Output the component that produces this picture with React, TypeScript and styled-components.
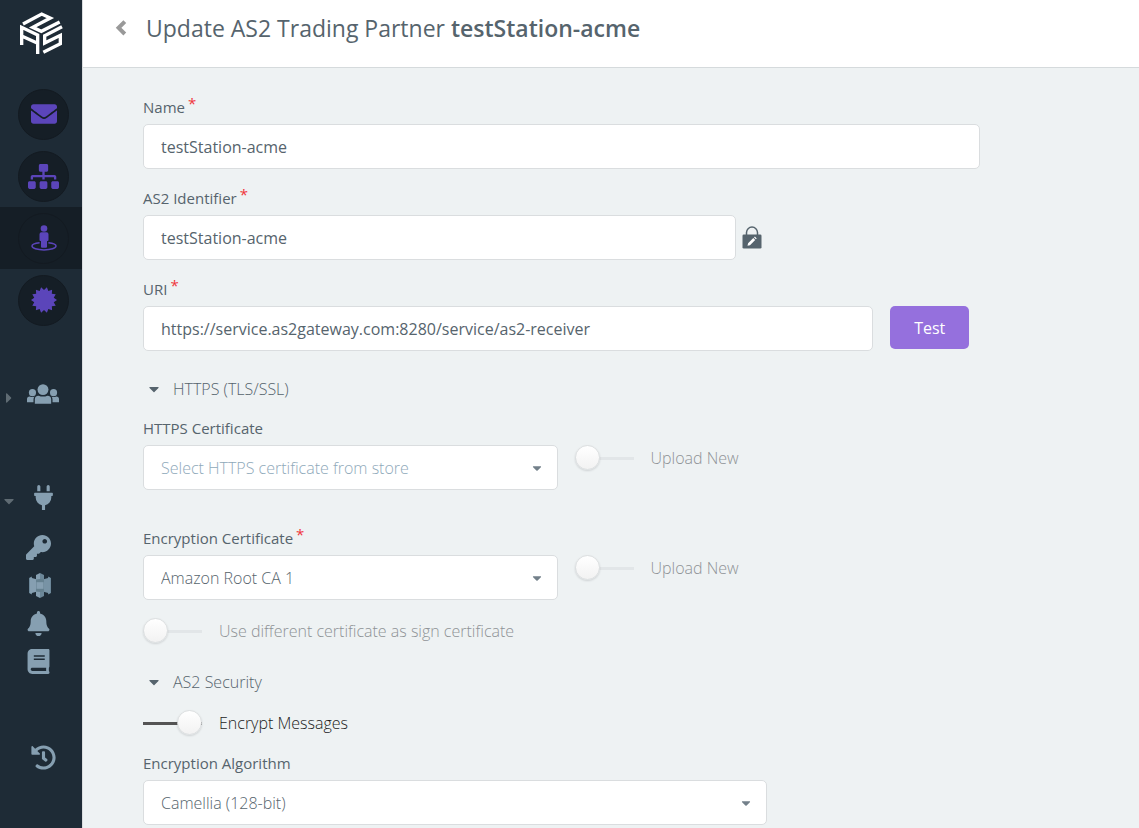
import React from "react";
import styled, { createGlobalStyle, css } from "styled-components";
import {
  FaEnvelope,
  FaSitemap,
  FaPlug,
  FaKey,
  FaBell,
  FaBook,
  FaHistory,
  FaCaretDown,
  FaCaretRight,
} from "react-icons/fa";

const color = {
  sidebar: "#1e2b36",
  sidebarDark: "#151e26",
  accent: "#5b45ba",
  icon: "#869fb1",
  caret: "#5f6b73",
  page: "#eef2f3",
  border: "#dadddf",
  text: "#56646d",
  muted: "#8e9396",
  placeholder: "#8fa9ba",
};

const GlobalStyle = createGlobalStyle`
  *, *::before, *::after { box-sizing: border-box; }
  body {
    margin: 0;
    background: ${color.page};
    color: ${color.text};
    font-family: "Open Sans", "Noto Sans", sans-serif;
    font-size: 16px;
  }
`;

const Shell = styled.div`
  display: flex;
  height: 100vh;
  overflow: hidden;
`;

const Sidebar = styled.nav`
  flex: 0 0 82px;
  background: ${color.sidebar};
`;

const Brand = styled.a`
  display: flex;
  justify-content: center;
  align-items: center;
  height: 66px;
  margin-bottom: 17px;
`;

const NavList = styled.ul`
  list-style: none;
  margin: 0;
  padding: 0;
`;

const CircleLink = styled.a<{ $active?: boolean }>`
  display: flex;
  align-items: center;
  height: 62px;
  padding-left: 18px;
  background: ${(p) => (p.$active ? color.sidebarDark : "transparent")};
`;

const Circle = styled.span`
  display: flex;
  align-items: center;
  justify-content: center;
  width: 51px;
  height: 51px;
  border: 1px solid #131a21;
  border-radius: 50%;
  background: ${color.sidebarDark};
  color: ${color.accent};
`;

const GroupButton = styled.button<{ $before: number }>`
  display: grid;
  grid-template-columns: 18px 50px;
  align-items: center;
  justify-items: center;
  height: 40px;
  margin: ${(p) => p.$before}px 0 0;
  padding: 0;
  border: 0;
  background: none;
  color: ${color.icon};
`;

const GroupCaret = styled.span`
  display: flex;
  padding-top: 7px;
  color: ${color.caret};
`;

const SubList = styled(NavList)`
  padding: 11px 0 0 18px;
`;

const SubLink = styled.a`
  display: flex;
  align-items: center;
  justify-content: center;
  width: 40px;
  height: 38px;
  color: ${color.icon};
`;

const Main = styled.main`
  flex: 1;
  min-width: 0;
  border-left: 1px solid ${color.border};
`;

const PageHeader = styled.header`
  display: flex;
  align-items: center;
  height: 68px;
  padding: 0 32px 11px;
  border-bottom: 1px solid #d5dadc;
  background: #fff;
`;

const BackButton = styled.button`
  display: flex;
  margin: 0 19px 0 0;
  padding: 0;
  border: 0;
  background: none;
  color: #999;
`;

const Title = styled.h1`
  margin: 0;
  font-size: 23px;
  line-height: 32px;
  font-weight: 400;
  white-space: nowrap;

  strong {
    font-weight: 600;
  }
`;

const Form = styled.form`
  width: 79.3%;
  margin-left: 60px;
  padding-top: 28px;
`;

const Field = styled.div<{ $after?: number }>`
  margin-bottom: ${(p) => p.$after ?? 18}px;
`;

const Label = styled.label`
  display: block;
  margin-bottom: 6px;
  font-size: 15px;
  line-height: 22px;
`;

const Required = styled.span`
  margin-left: 3px;
  font-size: 15px;
  line-height: 1;
  vertical-align: 4px;
  color: #f0353c;
`;

const ControlRow = styled.div<{ $gap: number; $top?: boolean }>`
  display: flex;
  align-items: ${(p) => (p.$top ? "flex-start" : "center")};
  gap: ${(p) => p.$gap}px;
`;

const control = css`
  display: block;
  height: 45px;
  padding: 0 17px;
  border: 1px solid ${color.border};
  border-radius: 5px;
  outline: 0;
  background-color: #fff;
  color: ${color.text};
  font-family: inherit;
  font-size: 16px;
`;

const TextInput = styled.input<{ $width: string }>`
  ${control}
  width: ${(p) => p.$width};
`;

const SelectBox = styled.div<{ $width: string }>`
  display: grid;
  align-items: center;
  width: ${(p) => p.$width};

  > * {
    grid-area: 1 / 1;
  }
  > svg {
    justify-self: end;
    margin-right: 14px;
    color: #73808a;
    pointer-events: none;
  }
`;

const NativeSelect = styled.select<{ $empty?: boolean }>`
  ${control}
  width: 100%;
  appearance: none;
  font-weight: 300;
  color: ${(p) => (p.$empty ? color.placeholder : color.text)};
`;

const IconButton = styled.button`
  display: flex;
  padding: 0;
  border: 0;
  background: none;
  color: ${color.text};
`;

const TestButton = styled.button`
  height: 43px;
  width: 79px;
  border: 0;
  border-radius: 5px;
  background: #9570dd;
  color: #fff;
  font-family: inherit;
  font-size: 16px;
`;

const SectionToggle = styled.button`
  display: flex;
  align-items: center;
  gap: 11px;
  margin: 26px 0 16px;
  padding: 0 0 0 3px;
  border: 0;
  background: none;
  color: ${color.text};
  font-family: inherit;
  font-size: 16px;
  font-weight: 300;
  line-height: 24px;
`;

const SwitchLabel = styled.label`
  display: flex;
  align-items: center;
  gap: 17px;
  height: 26px;
  color: ${color.muted};
  font-weight: 300;
  white-space: nowrap;

  &:has(input:checked) {
    color: #1c1c1c;
  }
`;

const SwitchInput = styled.input`
  flex: none;
  display: flex;
  appearance: none;
  width: 59px;
  height: 26px;
  margin: 0;
  background: linear-gradient(#e2e6e8, #e2e6e8) center / 100% 3px no-repeat;

  &::before {
    content: "";
    width: 25px;
    height: 25px;
    border: 1px solid #dcdfe0;
    border-radius: 50%;
    background: linear-gradient(#fff, #f2f2f2);
    box-shadow: 0 1px 2px rgba(34, 36, 38, 0.15);
  }

  &:checked {
    justify-content: flex-end;
    background-image: linear-gradient(#545454, #545454);
  }
`;

const UploadSwitch = styled(SwitchLabel)`
  margin-bottom: 19px;
`;

function Logo() {
  return (
    <svg width="43" height="42" viewBox="0 0 129 126" fill="none" stroke="#fff" strokeWidth="10">
      <path d="M9 36 L65 6 L91 18 L38 46 L64 58 L119 30" />
      <path d="M5 99 V46 L53 69 V126 M5 72 L53 94" />
      <path d="M126 44 L74 71 V93 L121 70 V95 L70 121" />
    </svg>
  );
}

function BackChevron() {
  return (
    <svg width="12" height="18" viewBox="0 0 12 18" fill="none" stroke="currentColor" strokeWidth="4">
      <path d="M9.800 2.600L3.600 8.800l6.200 6.200" />
    </svg>
  );
}

function PersonMarker() {
  return (
    <svg width="26" height="26" viewBox="0 0 26 26" fill="currentColor">
      <circle cx="13" cy="3.500" r="3.300" />
      <path d="M10.500 7.200h5a2 2 0 0 1 2 2v5.600a1.200 1.200 0 0 1-1.500 1.200v5.800a1 1 0 0 1-1 1h-4a1 1 0 0 1-1-1v-5.800a1.200 1.200 0 0 1-1.500-1.200v-5.600a2 2 0 0 1 2-2z" />
      <path
        d="M8.600 17.700C4 18.200 1 19.400 1 21c0 2.200 5.200 3.900 12 3.900S25 23.200 25 21c0-1.600-3-2.800-7.600-3.300"
        fill="none"
        stroke="currentColor"
        strokeWidth="1.500"
      />
    </svg>
  );
}

function Burst() {
  const points = Array.from({ length: 28 }, (_, i) => {
    const r = i % 2 === 0 ? 10 : 13;
    const a = (i * Math.PI) / 14;
    return `${(13 + r * Math.sin(a)).toFixed(2)},${(13 - r * Math.cos(a)).toFixed(2)}`;
  }).join(" ");
  return (
    <svg width="26" height="26" viewBox="0 0 26 26" fill="currentColor">
      <polygon points={points} />
    </svg>
  );
}

function People() {
  return (
    <svg width="32" height="20" viewBox="0 0 94 58" fill="currentColor">
      <circle cx="47" cy="16" r="16" />
      <circle cx="16" cy="25" r="10.500" />
      <circle cx="78" cy="25" r="10.500" />
      <path d="M23 58V45q0-11 11-11q13 5 26 0q11 0 11 11v13z" />
      <path d="M0 53v-9q0-8 8-8q8 4 14 0q-3 4-3 10v7z" />
      <path d="M94 53v-9q0-8-8-8q-8 4-14 0q3 4 3 10v7z" />
    </svg>
  );
}

function Bucket() {
  return (
    <svg width="26" height="25" viewBox="-4 0 26 25">
      <path d="M0 5l3-1.500v18L0 20z" fill="#6c8799" />
      <path d="M22 5l-3-1.500v18l3-1.500z" fill="#6c8799" />
      <path d="M1 4.600l6.500 1.600v12.600L1 20.400z" fill="#869fb1" />
      <path d="M21 4.600l-6.500 1.600v12.600l6.500 1.600z" fill="#7893a5" />
      <path d="M7 2l4-2v25l-4-2z" fill="#869fb1" />
      <path d="M15 2l-4-2v25l4-2z" fill="#6c8799" />
      <path d="M7 6.500l4-.6 4 .6v12l-4 .6-4-.6z" fill="#65808f" />
      <path d="M7.500 9.200h7v6.600h-7z" fill="#869fb1" />
    </svg>
  );
}

function LockEdit() {
  return (
    <svg width="20" height="23" viewBox="0 0 20 23">
      <path d="M4.500 10V6.600a5.500 5.500 0 0 1 11 0V10" fill="none" stroke="currentColor" strokeWidth="1.500" />
      <rect x="0.500" y="8.500" width="19" height="14" rx="1.300" fill="currentColor" />
      <path d="M5.500 19.800l.6-2.500 5.200-5.200 1.900 1.900L8 19.200zM12 11.400l.9-.8 1.800 1.900-.8.800z" fill="#fff" />
    </svg>
  );
}

function Select({ id, width, empty, value }: { id: string; width: string; empty?: boolean; value: string }) {
  return (
    <SelectBox $width={width}>
      <NativeSelect id={id} $empty={empty}>
        <option>{value}</option>
      </NativeSelect>
      <FaCaretDown size={14} />
    </SelectBox>
  );
}

function FieldLabel({ id, required, children }: { id: string; required?: boolean; children: string }) {
  return (
    <Label htmlFor={id}>
      {children}
      {required && <Required>*</Required>}
    </Label>
  );
}

const primaryLinks = [
  { name: "Messages", icon: <FaEnvelope size={26} /> },
  { name: "Stations", icon: <FaSitemap size={31} /> },
  { name: "Partners", icon: <PersonMarker />, active: true },
  { name: "Certificates", icon: <Burst /> },
];

const integrationLinks = [
  { name: "Keys", icon: <FaKey size={25} /> },
  { name: "Storage", icon: <Bucket /> },
  { name: "Notifications", icon: <FaBell size={25} /> },
  { name: "Documentation", icon: <FaBook size={25} /> },
];

export default function App() {
  return (
    <>
      <GlobalStyle />
      <Shell>
        <Sidebar aria-label="Main">
          <Brand href="#" aria-label="Home">
            <Logo />
          </Brand>
          <NavList>
            {primaryLinks.map((l) => (
              <li key={l.name}>
                <CircleLink href="#" aria-label={l.name} $active={l.active}>
                  <Circle>{l.icon}</Circle>
                </CircleLink>
              </li>
            ))}
          </NavList>
          <GroupButton type="button" aria-label="Users" $before={43}>
            <GroupCaret>
              <FaCaretRight size={16} />
            </GroupCaret>
            <People />
          </GroupButton>
          <GroupButton type="button" aria-label="Integrations" $before={63}>
            <GroupCaret>
              <FaCaretDown size={16} />
            </GroupCaret>
            <FaPlug size={25} />
          </GroupButton>
          <SubList>
            {integrationLinks.map((l) => (
              <li key={l.name}>
                <SubLink href="#" aria-label={l.name}>
                  {l.icon}
                </SubLink>
              </li>
            ))}
          </SubList>
          <GroupButton type="button" aria-label="History" $before={57}>
            <span />
            <FaHistory size={25} />
          </GroupButton>
        </Sidebar>

        <Main>
          <PageHeader>
            <BackButton type="button" aria-label="Back">
              <BackChevron />
            </BackButton>
            <Title>
              Update AS2 Trading Partner <strong>testStation-acme</strong>
            </Title>
          </PageHeader>

          <Form>
            <Field>
              <FieldLabel id="name" required>Name</FieldLabel>
              <TextInput id="name" $width="100%" defaultValue="testStation-acme" />
            </Field>
            <Field>
              <FieldLabel id="identifier" required>AS2 Identifier</FieldLabel>
              <ControlRow $gap={6}>
                <TextInput id="identifier" $width="70.8%" defaultValue="testStation-acme" />
                <IconButton type="button" aria-label="Edit identifier">
                  <LockEdit />
                </IconButton>
              </ControlRow>
            </Field>
            <Field>
              <FieldLabel id="uri" required>URI</FieldLabel>
              <ControlRow $gap={17} $top>
                <TextInput
                  id="uri"
                  $width="87.2%"
                  defaultValue="https://service.as2gateway.com:8280/service/as2-receiver"
                />
                <TestButton type="button">Test</TestButton>
              </ControlRow>
            </Field>

            <SectionToggle type="button">
              <FaCaretDown size={16} />
              HTTPS (TLS/SSL)
            </SectionToggle>
            <Field $after={37}>
              <FieldLabel id="https-cert">HTTPS Certificate</FieldLabel>
              <ControlRow $gap={17}>
                <Select id="https-cert" width="49.5%" empty value="Select HTTPS certificate from store" />
                <UploadSwitch>
                  <SwitchInput type="checkbox" />
                  Upload New
                </UploadSwitch>
              </ControlRow>
            </Field>
            <Field>
              <FieldLabel id="enc-cert" required>Encryption Certificate</FieldLabel>
              <ControlRow $gap={17}>
                <Select id="enc-cert" width="49.5%" value="Amazon Root CA 1" />
                <UploadSwitch>
                  <SwitchInput type="checkbox" />
                  Upload New
                </UploadSwitch>
              </ControlRow>
            </Field>
            <SwitchLabel>
              <SwitchInput type="checkbox" />
              Use different certificate as sign certificate
            </SwitchLabel>

            <SectionToggle type="button">
              <FaCaretDown size={16} />
              AS2 Security
            </SectionToggle>
            <Field $after={16}>
              <SwitchLabel>
                <SwitchInput type="checkbox" defaultChecked />
                Encrypt Messages
              </SwitchLabel>
            </Field>
            <Field>
              <FieldLabel id="algorithm">Encryption Algorithm</FieldLabel>
              <Select id="algorithm" width="74.5%" value="Camellia (128-bit)" />
            </Field>
          </Form>
        </Main>
      </Shell>
    </>
  );
}
